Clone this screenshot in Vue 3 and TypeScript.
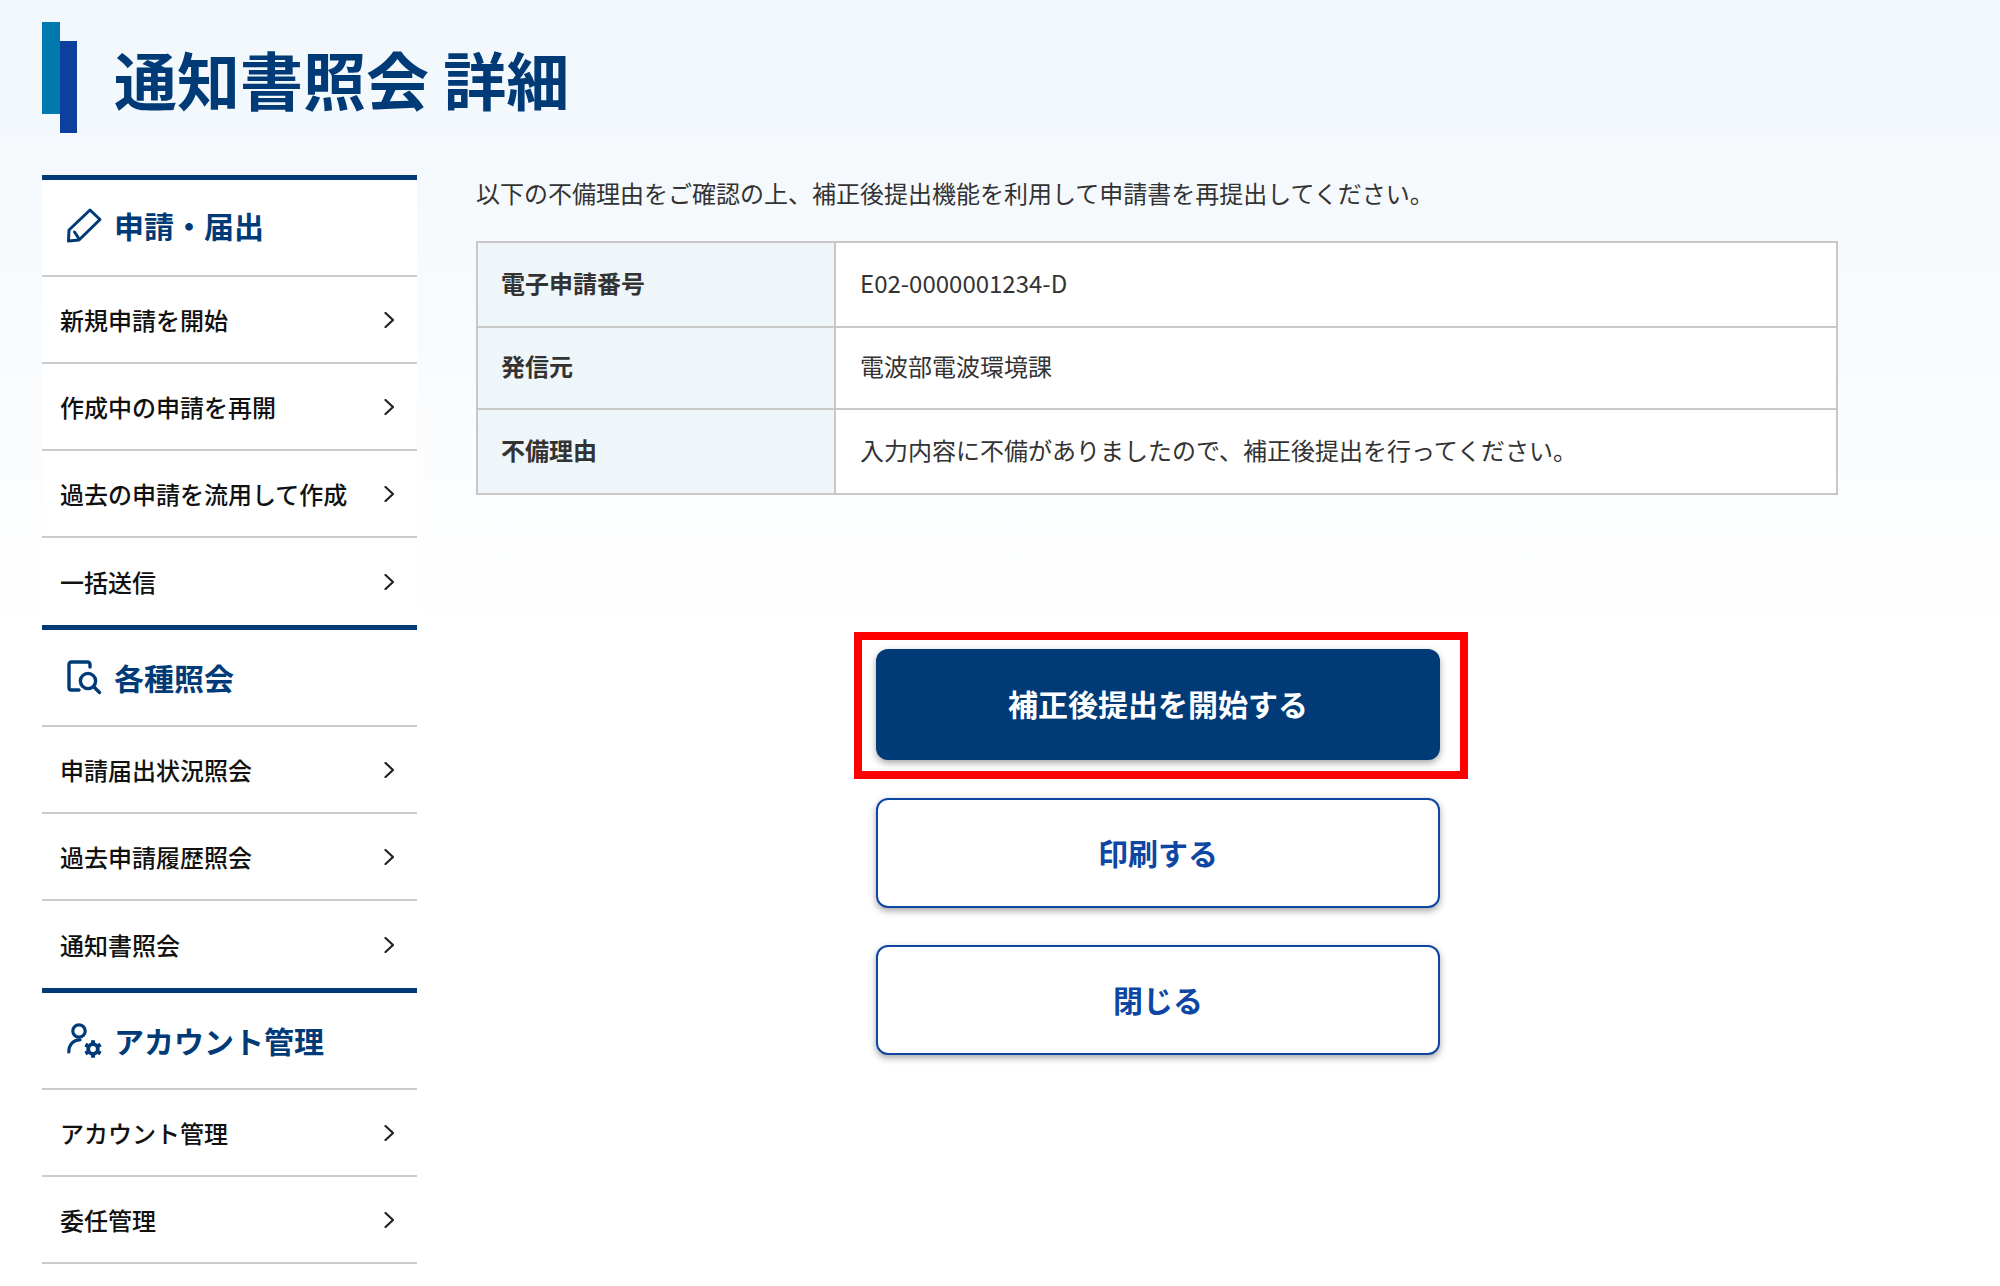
<script setup lang="ts">
interface NavSection {
  title: string
  icon: 'pen' | 'search' | 'account'
  items: string[]
}

const sections: NavSection[] = [
  { title: '申請・届出', icon: 'pen', items: ['新規申請を開始', '作成中の申請を再開', '過去の申請を流用して作成', '一括送信'] },
  { title: '各種照会', icon: 'search', items: ['申請届出状況照会', '過去申請履歴照会', '通知書照会'] },
  { title: 'アカウント管理', icon: 'account', items: ['アカウント管理', '委任管理'] },
]

const rows = [
  { label: '電子申請番号', value: 'E02-0000001234-D' },
  { label: '発信元', value: '電波部電波環境課' },
  { label: '不備理由', value: '入力内容に不備がありましたので、補正後提出を行ってください。' },
]
</script>

<template>
  <div class="page">
    <header class="page-head">
      <div class="mark"><span class="mark-a"></span><span class="mark-b"></span></div>
      <h1>通知書照会 詳細</h1>
    </header>
    <div class="body">
      <nav class="side">
        <section v-for="s in sections" :key="s.title" class="sec">
          <h2 class="sec-head">
            <svg v-if="s.icon === 'pen'" class="ico" viewBox="0 0 34 34" fill="none" stroke="currentColor" stroke-width="3" stroke-linejoin="round" stroke-linecap="round">
              <path d="M23 2 33 11.5 12 32 1.5 33 2 22Z" />
              <path d="M7.5 24 11.5 30" />
            </svg>
            <svg v-else-if="s.icon === 'search'" class="ico" viewBox="0 0 34 34" fill="none" stroke="currentColor" stroke-width="3.4" stroke-linecap="round">
              <path d="M23 7V4.5Q23 2 20.5 2H4.5Q2 2 2 4.5V27.5Q2 30 4.5 30H12" />
              <circle cx="21" cy="21" r="7.6" />
              <path d="M27 27 32.5 32.5" />
            </svg>
            <svg v-else class="ico" viewBox="0 0 34 34" fill="none" stroke="currentColor" stroke-width="3.2" stroke-linecap="round">
              <circle cx="12" cy="8" r="6.2" />
              <path d="M1.8 29C1.8 22 6 16.8 13 16.8" />
              <circle cx="26" cy="26" r="4.8" stroke-width="3.8" />
              <path d="M26 17.2v3M26 31.8v3M18.4 21.6l2.6 1.5M33.6 30.4l-2.6-1.5M18.4 30.4l2.6-1.5M33.6 21.6l-2.6 1.5" stroke-width="4" stroke-linecap="butt" />
            </svg>
            <span>{{ s.title }}</span>
          </h2>
          <ul class="items">
            <li v-for="item in s.items" :key="item" class="item">
              <span>{{ item }}</span>
              <svg class="chev" viewBox="0 0 10 16" fill="none" stroke="currentColor" stroke-width="2.2" stroke-linecap="round" stroke-linejoin="round">
                <path d="M1.5 1 9 8 1.5 15" />
              </svg>
            </li>
          </ul>
        </section>
      </nav>
      <main class="main">
        <p class="intro">以下の不備理由をご確認の上、補正後提出機能を利用して申請書を再提出してください。</p>
        <div class="table">
          <div v-for="r in rows" :key="r.label" class="row">
            <div class="label"><span>{{ r.label }}</span></div>
            <div class="value"><span>{{ r.value }}</span></div>
          </div>
        </div>
        <div class="actions">
          <div class="highlight"><button class="btn primary">補正後提出を開始する</button></div>
          <button class="btn outline">印刷する</button>
          <button class="btn outline">閉じる</button>
        </div>
      </main>
    </div>
  </div>
</template>

<style scoped>
.page {
  width: 2000px;
  height: 1286px;
  overflow: hidden;
  background: linear-gradient(180deg, #f1f7fc 0, #ffffff 640px);
  font-family: "Noto Sans CJK JP", "Noto Sans", sans-serif;
  color: #333;
}
.page-head {
  height: 175px;
  padding: 22px 0 0 42px;
  box-sizing: border-box;
  display: flex;
  align-items: flex-start;
  gap: 37px;
}
.mark { display: flex; width: 35px; height: 111px; }
.mark-a { width: 17.5px; height: 92px; background: #0079ae; }
.mark-b { width: 17.5px; height: 92px; margin-top: 19px; background: #0d3f9e; }
h1 {
  margin: 14px 0 0;
  font-size: 63px;
  line-height: 84px;
  font-weight: 700;
  color: #003b78;
}
.body { display: flex; gap: 59px; padding-left: 42px; }
.side { width: 375px; background: #fff; flex: none; }
.sec { border-top: 5px solid #003b78; }
.sec-head {
  margin: 0;
  height: 97px;
  box-sizing: border-box;
  padding: 0 0 2px 25px;
  display: flex;
  align-items: center;
  gap: 13px;
  font-size: 30px;
  font-weight: 700;
  color: #003b78;
  border-bottom: 2px solid #ccc;
}
.sec:first-child .sec-head { padding-bottom: 5px; }
.ico { width: 34px; height: 34px; flex: none; overflow: visible; }
.items { list-style: none; margin: 0; padding: 0; }
.item {
  height: 87px;
  box-sizing: border-box;
  padding: 0 23px 0 18px;
  display: flex;
  align-items: center;
  justify-content: space-between;
  font-size: 24px;
  font-weight: 500;
  color: #111;
  border-bottom: 2px solid #ccc;
}
.sec:not(:last-child) .item:last-child { border-bottom: none; }
.chev { width: 10px; height: 16px; color: #222; }
.main { width: 1362px; flex: none; }
.intro { margin: 0; font-size: 24px; line-height: 36px; color: #333; height: 66px; }
.table { border: 2px solid #c8c8c8; border-bottom-width: 0; background: #fff; }
.row { display: flex; height: 85px; border-bottom: 2px solid #c8c8c8; box-sizing: border-box; }
.row:nth-child(2) { height: 82px; }
.row:nth-child(3) { height: 85px; }
.label {
  width: 358px;
  box-sizing: border-box;
  padding: 0 0 5px 23px;
  display: flex;
  align-items: center;
  background: #eff6fa;
  border-right: 2px solid #c8c8c8;
  font-size: 24px;
  font-weight: 700;
}
.value { padding: 0 0 5px 24px; display: flex; align-items: center; font-size: 24px; }
.actions { margin-top: 137px; padding-left: 2px; display: flex; flex-direction: column; align-items: center; }
.highlight { border: 8px solid #ff0000; padding: 9px 20px 11px 14px; margin-left: 6px; background: #fff; }
.btn {
  display: block;
  width: 564px;
  height: 111px;
  box-sizing: border-box;
  border-radius: 12px;
  padding: 0 0 3px;
  font: 700 30px "Noto Sans CJK JP", sans-serif;
  box-shadow: 0 3px 7px rgba(0, 0, 0, 0.35);
}
.primary { background: #003b78; color: #fff; border: none; }
.outline { background: #fff; color: #0e46a3; border: 2.5px solid #0e46a3; margin-top: 37px; height: 110px; }
.highlight + .outline { margin-top: 19px; }
</style>
